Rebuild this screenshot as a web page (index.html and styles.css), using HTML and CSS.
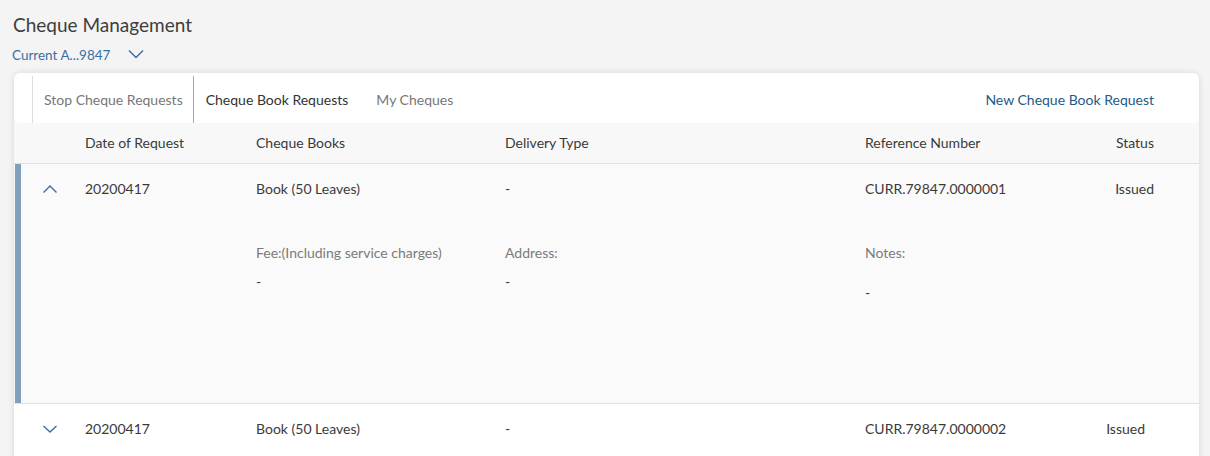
FILE: index.html
```html
<!DOCTYPE html>
<html>
<head>
<meta charset="utf-8">
<link rel="stylesheet" href="styles.css">
</head>
<body>
<div class="page">
  <h1 class="title">Cheque Management</h1>
  <div class="account">
    <span>Current A...9847</span>
    <svg class="chev-acc" width="16" height="10" viewBox="0 0 16 10"><path d="M1 1.5 L8 8.5 L15 1.5" fill="none" stroke="#3b6fa3" stroke-width="1.5"/></svg>
  </div>
  <div class="card">
    <div class="tabs">
      <div class="tab first">Stop Cheque Requests</div>
      <div class="tab active">Cheque Book Requests</div>
      <div class="tab third">My Cheques</div>
      <div class="tab-action">New Cheque Book Request</div>
    </div>
    <div class="table">
      <div class="grid head">
        <div></div>
        <div>Date of Request</div>
        <div>Cheque Books</div>
        <div>Delivery Type</div>
        <div>Reference Number</div>
        <div class="right">Status</div>
      </div>
      <div class="row expanded">
        <div class="grid main">
          <div class="chev"><svg width="16" height="10" viewBox="0 0 16 10"><path d="M1.5 8.5 L8 2 L14.5 8.5" fill="none" stroke="#3b6fa3" stroke-width="1.4"/></svg></div>
          <div>20200417</div>
          <div>Book (50 Leaves)</div>
          <div>-</div>
          <div>CURR.79847.0000001</div>
          <div class="right">Issued</div>
        </div>
        <div class="grid details">
          <div></div>
          <div></div>
          <div class="field"><div class="label">Fee:(Including service charges)</div><div class="value">-</div></div>
          <div class="field"><div class="label">Address:</div><div class="value">-</div></div>
          <div class="field notes"><div class="label">Notes:</div><div class="value">-</div></div>
        </div>
      </div>
      <div class="row last">
        <div class="grid main">
          <div class="chev down"><svg width="16" height="10" viewBox="0 0 16 10"><path d="M1.5 2 L8 8 L14.5 2" fill="none" stroke="#3b6fa3" stroke-width="1.4"/></svg></div>
          <div>20200417</div>
          <div>Book (50 Leaves)</div>
          <div>-</div>
          <div>CURR.79847.0000002</div>
          <div class="right status2">Issued</div>
        </div>
      </div>
    </div>
  </div>
</div>
</body>
</html>
```
FILE: styles.css
```css
html, body {
  margin: 0;
  padding: 0;
  background: #f4f4f4;
  font-family: Lato, "Noto Sans", sans-serif;
  color: #3a3a3a;
  overflow: hidden;
}
.page {
  padding: 13px 11px 0 14px;
  height: 456px;
  box-sizing: border-box;
}
.title {
  margin: 0 0 0 -1px;
  font-size: 19px;
  font-weight: 400;
  line-height: 24px;
  color: #3d3d3d;
}
.account {
  margin-top: 9px;
  margin-left: -2px;
  display: flex;
  align-items: center;
  gap: 18px;
  font-size: 13.5px;
  line-height: 18px;
  color: #3b6fa3;
}
.chev-acc { margin-top: -2px; }
.card {
  margin-top: 9px;
  background: #f8f8f8;
  border-radius: 6px;
  box-shadow: 0 0 6px rgba(0,0,0,0.12);
  height: 400px;
  overflow: hidden;
}
.tabs {
  height: 50px;
  background: #ffffff;
  border-radius: 6px;
  display: flex;
  align-items: flex-end;
  padding-left: 18px;
  padding-right: 45px;
  font-size: 14px;
}
.tab {
  height: 47px;
  display: flex;
  align-items: center;
  padding: 0 10px 0 11px;
  border-left: 1px solid transparent;
  color: #777777;
}
.tab.first { border-left-color: #dddddd; }
.tab.active { border-left-color: #a8a8a8; color: #333333; padding-right: 13px; padding-left: 12px; }
.tab.third { padding-left: 14px; }
.tab-action {
  margin-left: auto;
  height: 47px;
  display: flex;
  align-items: center;
  color: #1e5a86;
}
.grid {
  display: grid;
  grid-template-columns: 71px 171px 249px 360px 1fr auto;
  padding-right: 45px;
  font-size: 14px;
  line-height: 18px;
}
.right { text-align: right; }
.head {
  height: 41px;
  padding-bottom: 1px;
  box-sizing: border-box;
  align-items: center;
  border-bottom: 1px solid #e0e0e0;
  color: #3a3a3a;
}
.row {
  border-bottom: 1px solid #e0e0e0;
  background: #ffffff;
}
.row.last { height: 80px; }
.row.expanded {
  background: #fafafa;
  box-shadow: inset 1px 0 0 #f8f8f8, inset 7px 0 0 #7f9fbb;
  height: 239px;
}
.main {
  padding-top: 16px;
  height: 32px;
}
.chev {
  padding-left: 28px;
  padding-top: 0;
}
.chev.down { padding-top: 0; }
.status2 { padding-right: 9px; }
.details {
  grid-template-columns: 71px 171px 249px 360px 1fr;
  margin-top: 32px;
}
.field .label {
  color: #7a7a7a;
}
.field .value {
  margin-top: 11px;
}
.field.notes .value {
  margin-top: 22px;
}
```
